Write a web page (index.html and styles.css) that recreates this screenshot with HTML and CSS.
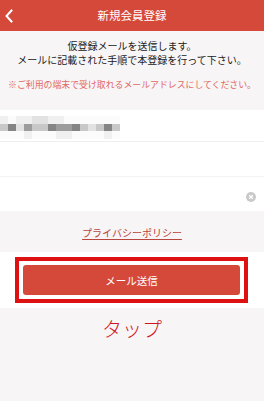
FILE: index.html
```html
<!DOCTYPE html>
<html lang="ja">
<head>
<meta charset="utf-8">
<link rel="stylesheet" href="styles.css">
</head>
<body>
<header class="topbar">
  <span class="back">
    <svg width="10" height="14" viewBox="0 0 10 14"><path d="M7.5 1.5 L2.5 7 L7.5 12.5" fill="none" stroke="#fff" stroke-width="2" stroke-linecap="square"/></svg>
  </span>
  <h1 class="title">新規会員登録</h1>
  <span></span>
</header>
<section class="intro">
  <p class="lead">仮登録メールを送信します。<br>メールに記載された手順で本登録を行って下さい。</p>
  <p class="note">※ご利用の端末で受け取れるメールアドレスにしてください。</p>
</section>
<section class="form">
  <div class="row row-first">
    <div class="mosaic">
      <i class="s1"></i><i class="s0"></i><i class="s1"></i><i class="s1"></i><i class="s2"></i><i class="s2"></i><i class="s1"></i><i class="s1"></i><i class="s0"></i><i class="s0"></i><i class="s0"></i><i class="s0"></i><i class="s0"></i><i class="s0"></i><i class="s0"></i>
      <i class="s3"></i><i class="s5"></i><i class="s2"></i><i class="s4"></i><i class="s3"></i><i class="s3"></i><i class="s5"></i><i class="s4"></i><i class="s4"></i><i class="s5"></i><i class="s3"></i><i class="s2"></i><i class="s3"></i><i class="s5"></i><i class="s3"></i>
      <i class="s0"></i><i class="s0"></i><i class="s0"></i><i class="s1"></i><i class="s0"></i><i class="s0"></i><i class="s0"></i><i class="s1"></i><i class="s1"></i><i class="s0"></i><i class="s0"></i><i class="s0"></i><i class="s0"></i><i class="s1"></i><i class="s0"></i>
    </div>
  </div>
  <div class="row"></div>
  <div class="row row-last">
    <span class="clear">
      <svg width="10" height="10" viewBox="0 0 10 10"><circle cx="5" cy="5" r="5" fill="#c9c9c9"/><path d="M3.2 3.2 L6.8 6.8 M6.8 3.2 L3.2 6.8" stroke="#fff" stroke-width="1.3"/></svg>
    </span>
  </div>
</section>
<div class="policy"><a href="#">プライバシーポリシー</a></div>
<section class="action">
  <div class="highlight">
    <button class="send">メール送信</button>
  </div>
</section>
<p class="tap">タップ</p>
</body>
</html>
```

FILE: styles.css
```css
html, body {
  margin: 0;
  padding: 0;
}
body {
  width: 264px;
  height: 401px;
  background: #f8f5f6;
  font-family: "Noto Sans CJK JP", "Noto Sans", sans-serif;
  overflow: hidden;
}
.topbar {
  height: 31px;
  background: #d5493b;
  display: grid;
  grid-template-columns: 32px 1fr 32px;
  align-items: center;
}
.back {
  display: flex;
  padding-left: 4px;
  padding-top: 1px;
}
.title {
  margin: 0;
  text-align: center;
  color: #fff;
  font-size: 11.5px;
  font-weight: normal;
  line-height: 31px;
}
.intro {
  padding: 8px 0 19px;
  text-align: center;
}
.lead {
  margin: 0;
  font-size: 10px;
  line-height: 14px;
  color: #222;
}
.note {
  margin: 12px 0 0;
  font-size: 8.9px;
  line-height: 12px;
  color: #e0685f;
  white-space: nowrap;
}
.form {
  background: #fff;
}
.row {
  height: 35px;
  box-sizing: border-box;
  border-top: 1px solid #efefef;
  display: flex;
  align-items: center;
}
.row-first {
  height: 31px;
  border-top: none;
}
.row-last {
  border-top-color: #f3f3f3;
  justify-content: flex-end;
  padding-right: 8px;
}
.clear {
  display: flex;
  margin-top: 6px;
}
.mosaic {
  display: grid;
  grid-template-columns: repeat(15, 8px);
  grid-auto-rows: 7.5px;
  margin-top: 4px;
}
.mosaic i { display: block; }
.s0 { background: #fbfbfb; }
.s1 { background: #f0f0f0; }
.s2 { background: #e2e2e2; }
.s3 { background: #c8c8c8; }
.s4 { background: #9c9c9c; }
.s5 { background: #858585; }
.policy {
  height: 41px;
  display: flex;
  align-items: center;
  justify-content: center;
}
.policy a {
  color: #b8463c;
  font-size: 10px;
  text-decoration: underline;
  text-underline-offset: 2px;
  margin-top: 1px;
}
.action {
  background: #fff;
  height: 56px;
  padding: 5px 16px 0 15px;
  box-sizing: border-box;
}
.highlight {
  border: 4px solid #dd1111;
  padding: 4px;
  height: 46px;
  box-sizing: border-box;
}
.send {
  display: block;
  width: 100%;
  height: 30px;
  border: none;
  border-radius: 3px;
  background: #d5493b;
  color: #fff;
  font-family: "Noto Sans CJK JP", "Noto Sans", sans-serif;
  font-size: 10.5px;
  padding: 0;
}
.tap {
  margin: 4px 0 0;
  text-align: center;
  color: #d0161b;
  font-size: 20px;
  font-weight: 300;
  line-height: 34px;
}
```
